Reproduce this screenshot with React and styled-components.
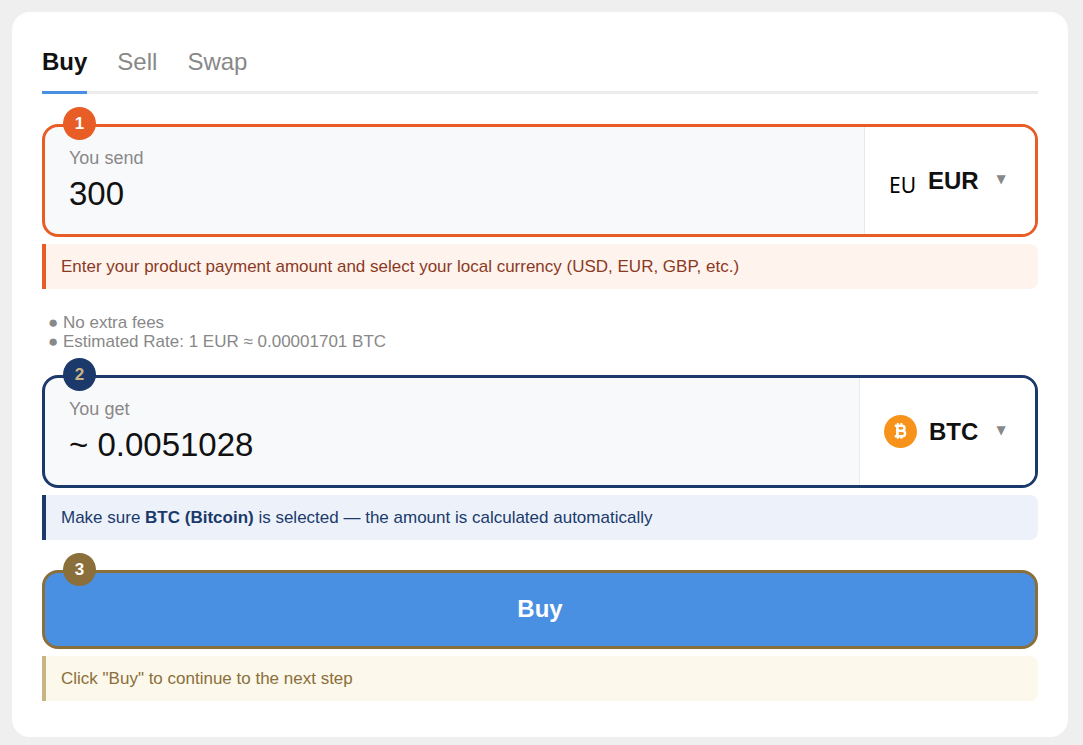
import React, { useState } from "react";
import styled, { createGlobalStyle } from "styled-components";

const GlobalStyle = createGlobalStyle`
  *, *::before, *::after {
    box-sizing: border-box;
  }

  body {
    margin: 0;
    padding: 12px 15px 8px 12px;
    background: #efefef;
    color: #111;
    font-family: "Liberation Sans", Arial, sans-serif;
  }

  button, input, select {
    font-family: inherit;
    color: inherit;
  }
`;

const Card = styled.main`
  padding: 30px 30px 36px;
  border-radius: 18px;
  background: #fff;
`;

const Tabs = styled.nav`
  display: flex;
  gap: 30px;
  margin-bottom: 30px;
  border-bottom: 3px solid #ececec;
`;

const Tab = styled.button`
  margin: 0 0 -3px;
  padding: 6px 0 15px;
  border: 0;
  border-bottom: 3px solid ${({ $active }) => ($active ? "#4a90e2" : "transparent")};
  background: none;
  color: ${({ $active }) => ($active ? "#111" : "#888")};
  font-size: 24px;
  font-weight: ${({ $active }) => ($active ? 700 : 400)};
  line-height: 28px;
  cursor: pointer;
`;

const Step = styled.section`
  position: relative;
`;

const Badge = styled.span`
  position: absolute;
  top: -17px;
  left: 21px;
  z-index: 1;
  width: 33px;
  height: 33px;
  border-radius: 50%;
  background: ${({ $background }) => $background};
  color: ${({ $color }) => $color || "#fff"};
  font-size: 17px;
  font-weight: 700;
  line-height: 33px;
  text-align: center;
`;

const Field = styled.div`
  display: flex;
  border: 3px solid ${({ $color }) => $color};
  border-radius: 16px;
  background: #f8f9fb;
  overflow: hidden;
`;

const Amount = styled.div`
  display: flex;
  flex: 1;
  flex-direction: column;
  gap: 5px;
  min-width: 0;
  padding: 21px 24px 20px;
`;

const Label = styled.label`
  color: #888;
  font-size: 18px;
  line-height: 21px;
`;

const AmountInput = styled.input`
  width: 100%;
  height: 40px;
  padding: 0;
  border: 0;
  outline: none;
  background: none;
  font-size: 33px;
`;

const Currency = styled.div`
  display: flex;
  align-items: center;
  gap: 12px;
  padding: 0 24px;
  border-left: 1px solid #e8eaed;
  background: #fff;
`;

const Flag = styled.span`
  padding-top: 8px;
  color: #000;
  font-family: "Noto Sans", sans-serif;
  font-size: 21px;
`;

const CurrencySelect = styled.select`
  appearance: none;
  padding: 0;
  border: 0;
  outline: none;
  background: none;
  font-size: 24px;
  font-weight: 700;
  cursor: pointer;
`;

const Arrow = styled.span`
  width: 20px;
  padding-bottom: 3px;
  color: #888;
  font-family: "DejaVu Sans", sans-serif;
  font-size: 12px;
  text-align: center;
`;

const Note = styled.p`
  margin: 7px 0 0;
  padding: 12px 15px;
  border-left: 4px solid ${({ $border }) => $border};
  border-radius: 0 8px 8px 0;
  background: ${({ $background }) => $background};
  color: ${({ $color }) => $color};
  font-size: 17px;
  line-height: 21px;
`;

const Info = styled.div`
  margin: 24px 0;
  padding-left: 6px;
  color: #888;
  font-size: 17px;
  line-height: 19px;
`;

const SubmitStep = styled(Step)`
  margin-top: 30px;
`;

const Submit = styled.button`
  display: block;
  width: 100%;
  padding: 21px 22px 23px;
  border: 3px solid #8b6f3a;
  border-radius: 16px;
  background: #4a90e2;
  color: #fff;
  font-size: 24px;
  font-weight: 700;
  line-height: 29px;
  cursor: pointer;
`;

function BitcoinIcon() {
  return (
    <svg width="33" height="33" viewBox="0 0 33 33" aria-hidden="true">
      <circle cx="16.5" cy="16.5" r="16.5" fill="#f7931a" />
      <g fill="none" stroke="#fff">
        <path
          strokeWidth="2.4"
          d="M10.8 10.8h7.2a2.5 2.5 0 0 1 0 5h-4h4.4a2.7 2.7 0 0 1 0 5.4h-7.6"
        />
        <path strokeWidth="2.8" d="M13.4 10.4v11.2" />
        <path strokeWidth="2" d="M13.8 8v2.4M17.4 8v2.4M13.8 21.4v2.4M17.4 21.4v2.4" />
      </g>
    </svg>
  );
}

function CurrencyField({ id, label, value, onChange, readOnly, color, icon, code }) {
  return (
    <Field $color={color}>
      <Amount>
        <Label htmlFor={id}>{label}</Label>
        <AmountInput id={id} value={value} onChange={onChange} readOnly={readOnly} />
      </Amount>
      <Currency>
        {icon}
        <CurrencySelect aria-label={`${label} currency`} defaultValue={code}>
          <option value={code}>{code}</option>
        </CurrencySelect>
        <Arrow aria-hidden="true">▼</Arrow>
      </Currency>
    </Field>
  );
}

export default function App() {
  const [tab, setTab] = useState("Buy");
  const [amount, setAmount] = useState("300");

  return (
    <>
      <GlobalStyle />
      <Card>
        <Tabs>
          {["Buy", "Sell", "Swap"].map((name) => (
            <Tab key={name} type="button" $active={tab === name} onClick={() => setTab(name)}>
              {name}
            </Tab>
          ))}
        </Tabs>

        <Step>
          <Badge $background="#e85d26">1</Badge>
          <CurrencyField
            id="send"
            label="You send"
            value={amount}
            onChange={(event) => setAmount(event.target.value)}
            color="#e85d26"
            icon={<Flag>EU</Flag>}
            code="EUR"
          />
          <Note $border="#e85d26" $background="#fff3ee" $color="#8b3a1f">
            Enter your product payment amount and select your local currency (USD, EUR, GBP, etc.)
          </Note>
        </Step>

        <Info>
          <div>● No extra fees</div>
          <div>● Estimated Rate: 1 EUR ≈ 0.00001701 BTC</div>
        </Info>

        <Step>
          <Badge $background="#1b3a6b" $color="#c9b584">2</Badge>
          <CurrencyField
            id="get"
            label="You get"
            value="~ 0.0051028"
            readOnly
            color="#1b3a6b"
            icon={<BitcoinIcon />}
            code="BTC"
          />
          <Note $border="#1b3a6b" $background="#edf2fa" $color="#1b3a6b">
            Make sure <strong>BTC (Bitcoin)</strong> is selected — the amount is calculated
            automatically
          </Note>
        </Step>

        <SubmitStep>
          <Badge $background="#8b6f3a">3</Badge>
          <Submit type="button">Buy</Submit>
          <Note $border="#c9b584" $background="#fcf8ec" $color="#8b6f3a">
            Click "Buy" to continue to the next step
          </Note>
        </SubmitStep>
      </Card>
    </>
  );
}
